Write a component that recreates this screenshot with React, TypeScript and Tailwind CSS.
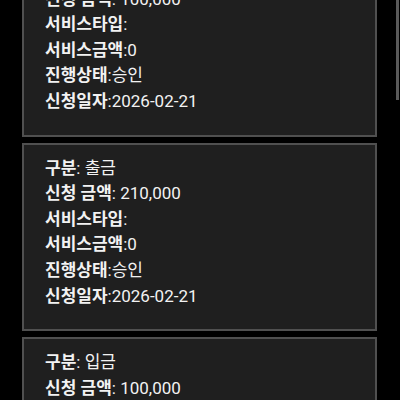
const items = [
  { type: "입금", amount: "100,000", date: "2026-02-21" },
  { type: "출금", amount: "210,000", date: "2026-02-21" },
  { type: "입금", amount: "100,000", date: "2026-02-21" },
];

function Row({ label, value, space }: { label: string; value: string; space?: boolean }) {
  return (
    <p className="leading-[25.6px] whitespace-nowrap">
      <span className="font-bold">{label}</span>
      <span>:{space ? " " : ""}{value}</span>
    </p>
  );
}

export default function App() {
  return (
    <div
      className="relative w-[400px] h-[400px] overflow-hidden bg-black text-[17px] text-[#f2f2f2]"
      style={{ fontFamily: "Roboto, 'Noto Sans CJK KR', sans-serif" }}
    >
      <div className="flex flex-col gap-[6px] mt-[-52px] ml-[22px] mr-[23px]">
        {items.map((it, i) => (
          <div key={i} className="bg-[#1f1f1f] border-2 border-[#505050] pt-[11px] pb-[20px] px-[21px]">
            <Row label="구분" value={it.type} space />
            <Row label="신청 금액" value={it.amount} space />
            <Row label="서비스타입" value="" />
            <Row label="서비스금액" value="0" />
            <Row label="진행상태" value="승인" />
            <Row label="신청일자" value={it.date} />
          </div>
        ))}
      </div>
      {/* scrollbar */}
      <div className="absolute top-0 right-[1px] w-[3px] h-[100px] bg-[#5a5a5a]" />
    </div>
  );
}
